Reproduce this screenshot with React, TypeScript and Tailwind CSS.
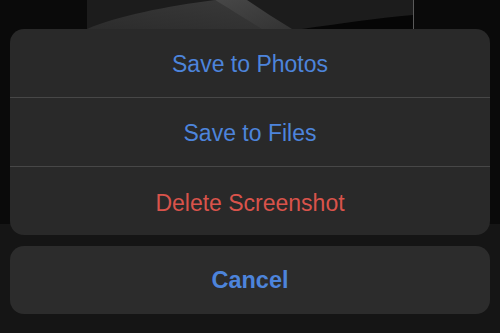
import React from "react";

const font = { fontFamily: '"Liberation Sans", Arial, sans-serif' };

function Thumbnail() {
  return (
    <div className="mx-[87px] h-[29px] w-[327px] overflow-hidden border-r border-[#5a5a5a] bg-[#1c1c1c]">
      <svg width="327" height="29" viewBox="0 0 327 29">
        <defs>
          <linearGradient id="w1" x1="0" y1="1" x2="1" y2="0">
            <stop offset="0" stopColor="#2c2c2c" />
            <stop offset="1" stopColor="#3a3a3a" />
          </linearGradient>
          <linearGradient id="w2" x1="0" y1="0" x2="1" y2="1">
            <stop offset="0" stopColor="#474747" />
            <stop offset="1" stopColor="#333333" />
          </linearGradient>
        </defs>
        <path d="M0 29 C30 16 80 6 128 0 L200 29 Z" fill="url(#w1)" />
        <path d="M128 0 L160 0 C175 10 190 20 205 29 L175 29 C160 20 145 10 128 0 Z" fill="url(#w2)" />
        <path d="M215 29 C250 24 290 18 326 15 L326 29 Z" fill="#060606" />
      </svg>
    </div>
  );
}

function Row({ label, color, last }: { label: string; color: string; last?: boolean }) {
  return (
    <div
      className={`flex items-center justify-center pt-[2px] text-[23px] ${color} ${
        last ? "h-[68px] pt-[4px]" : "h-[69px] border-b border-[#474747]"
      }`}
    >
      {label}
    </div>
  );
}

export default function App() {
  return (
    <div
      className="h-[333px] w-[500px] overflow-hidden bg-[linear-gradient(to_bottom,#0a0a0a_224px,#151515_224px)]"
      style={font}
    >
      <Thumbnail />
      <div className="mx-[10px] overflow-hidden rounded-[14px] bg-[#292929]">
        <Row label="Save to Photos" color="text-[#4d84db]" />
        <Row label="Save to Files" color="text-[#4d84db]" />
        <Row label="Delete Screenshot" color="text-[#d9534b]" last />
      </div>
      <div className="mx-[10px] mt-[11px] flex h-[68px] items-center justify-center rounded-[14px] bg-[#2c2c2c] pt-[2px] text-[23.5px] font-bold text-[#4d84db]">
        Cancel
      </div>
    </div>
  );
}
